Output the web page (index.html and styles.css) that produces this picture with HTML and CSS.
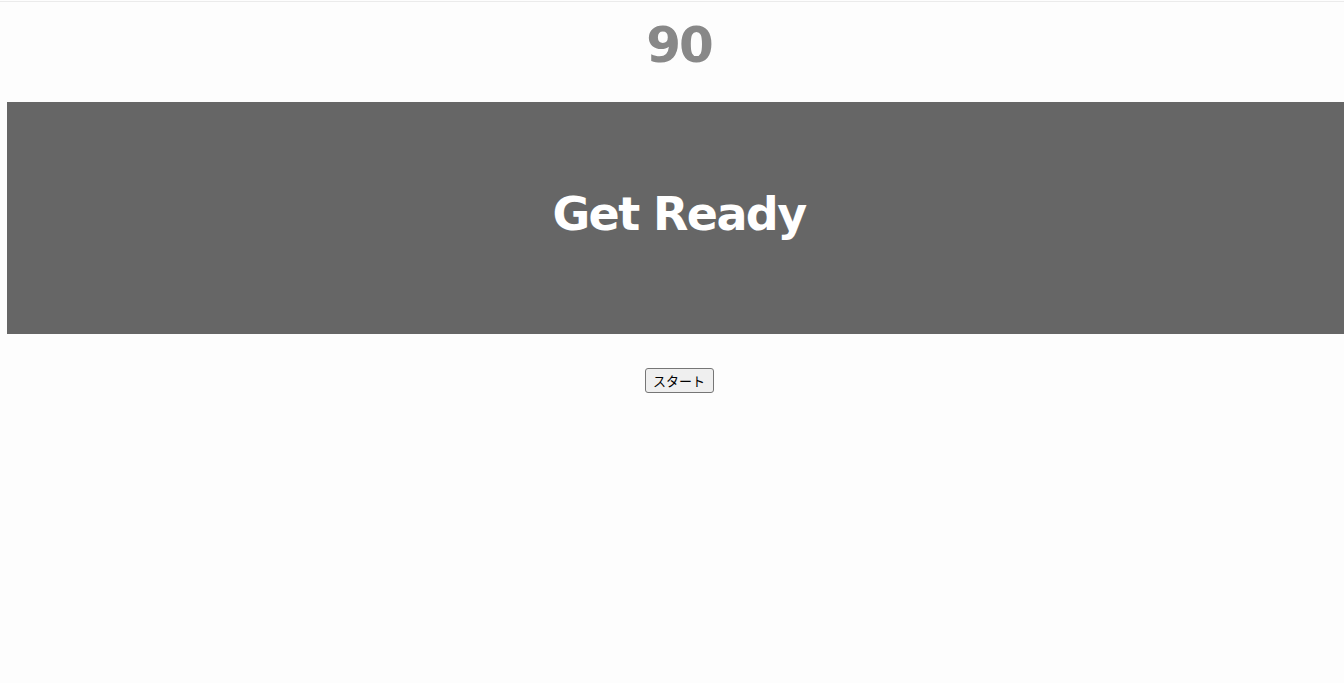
FILE: index.html
```html
<!DOCTYPE html>
<html lang="ja">
<head>
<meta charset="utf-8">
<title>Get Ready</title>
<link rel="stylesheet" href="styles.css">
</head>
<body>
<div class="topline"></div>
<main class="page">
  <div class="count">90</div>
  <section class="banner"><h1 class="banner-text">Get Ready</h1></section>
  <div class="controls"><button class="start-btn" type="button">スタート</button></div>
</main>
</body>
</html>
```

FILE: styles.css
```css
html { overflow: hidden; background: #fdfdfd; }
body { margin: 0; background: #fdfdfd; font-family: "DejaVu Sans", "Noto Sans CJK JP", sans-serif; }
.topline { height: 1px; margin-top: 1px; background: #ebebeb; }
.page { width: 1344px; margin-left: 7px; }
.count {
  height: 100px;
  display: flex;
  justify-content: center;
  align-items: flex-start;
  padding-top: 10px;
  box-sizing: border-box;
  color: #888888;
  font-weight: bold;
  font-size: 50px;
  line-height: 66px;
  letter-spacing: -2px;
}
.banner {
  height: 232px;
  background: #666666;
  display: flex;
  justify-content: center;
  align-items: center;
}
.banner-text {
  margin: 0;
  color: #ffffff;
  font-size: 46px;
  font-weight: bold;
  line-height: 1;
  padding-bottom: 8px;
  letter-spacing: -1.6px;
}
.controls { display: flex; justify-content: center; padding-top: 34px; }
.start-btn {
  height: 25px;
  width: 69px;
  padding: 0 6px;
  font-family: "Noto Sans CJK JP", sans-serif;
  font-size: 13px;
  color: #000;
  background: #efefef;
  border: 1px solid #767676;
  border-radius: 3px;
}
```
